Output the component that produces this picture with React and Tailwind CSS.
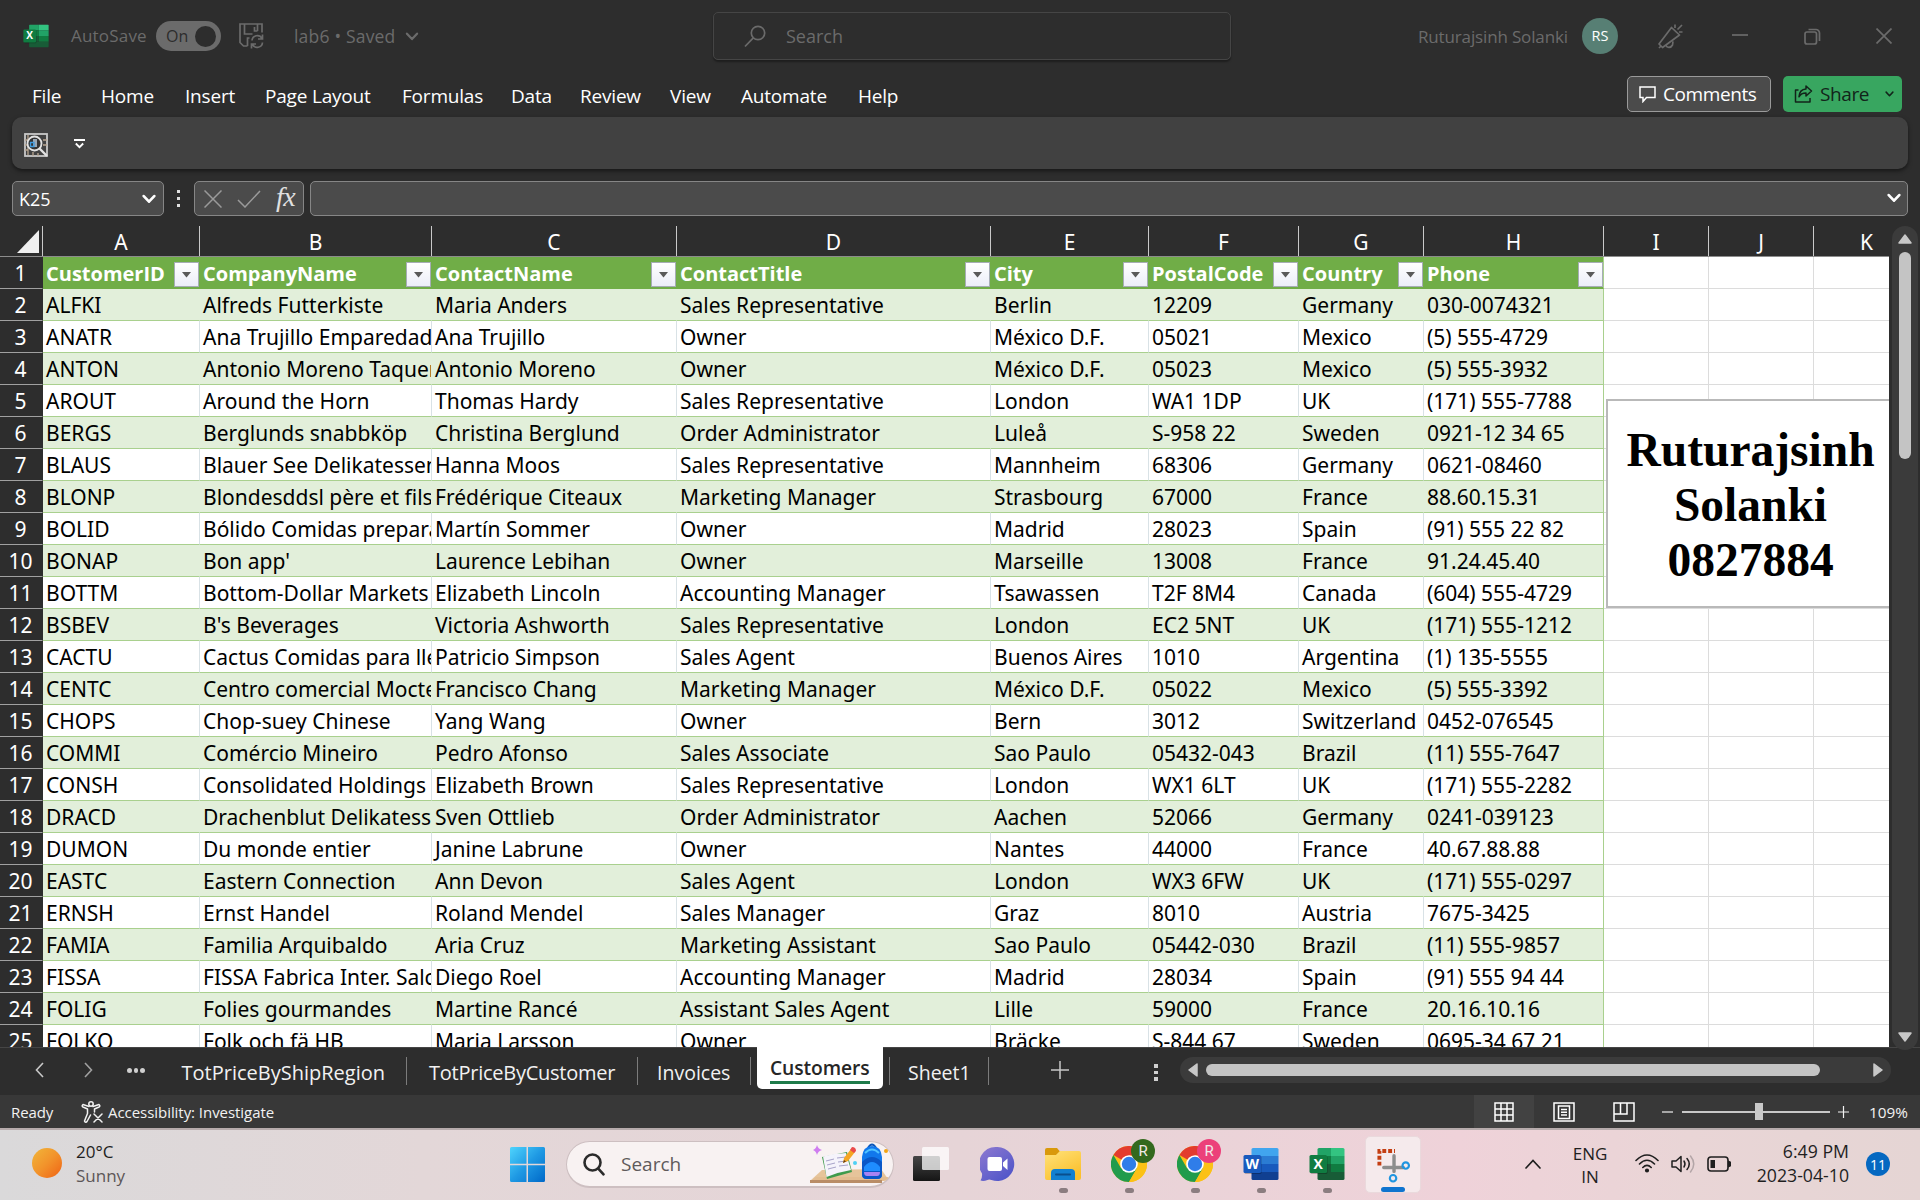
import React from "react";

const COLS = [
  { k: "A", w: "w-[157px]", h: "CustomerID" },
  { k: "B", w: "w-[232px]", h: "CompanyName" },
  { k: "C", w: "w-[245px]", h: "ContactName" },
  { k: "D", w: "w-[314px]", h: "ContactTitle" },
  { k: "E", w: "w-[158px]", h: "City" },
  { k: "F", w: "w-[150px]", h: "PostalCode" },
  { k: "G", w: "w-[125px]", h: "Country" },
  { k: "H", w: "w-[180px]", h: "Phone" },
  { k: "I", w: "w-[105px]" },
  { k: "J", w: "w-[105px]" },
  { k: "K", w: "w-[106px]" },
];

const ROWS = [
  ["ALFKI", "Alfreds Futterkiste", "Maria Anders", "Sales Representative", "Berlin", "12209", "Germany", "030-0074321"],
  ["ANATR", "Ana Trujillo Emparedados", "Ana Trujillo", "Owner", "México D.F.", "05021", "Mexico", "(5) 555-4729"],
  ["ANTON", "Antonio Moreno Taquería", "Antonio Moreno", "Owner", "México D.F.", "05023", "Mexico", "(5) 555-3932"],
  ["AROUT", "Around the Horn", "Thomas Hardy", "Sales Representative", "London", "WA1 1DP", "UK", "(171) 555-7788"],
  ["BERGS", "Berglunds snabbköp", "Christina Berglund", "Order Administrator", "Luleå", "S-958 22", "Sweden", "0921-12 34 65"],
  ["BLAUS", "Blauer See Delikatessen", "Hanna Moos", "Sales Representative", "Mannheim", "68306", "Germany", "0621-08460"],
  ["BLONP", "Blondesddsl père et fils", "Frédérique Citeaux", "Marketing Manager", "Strasbourg", "67000", "France", "88.60.15.31"],
  ["BOLID", "Bólido Comidas preparadas", "Martín Sommer", "Owner", "Madrid", "28023", "Spain", "(91) 555 22 82"],
  ["BONAP", "Bon app'", "Laurence Lebihan", "Owner", "Marseille", "13008", "France", "91.24.45.40"],
  ["BOTTM", "Bottom-Dollar Markets", "Elizabeth Lincoln", "Accounting Manager", "Tsawassen", "T2F 8M4", "Canada", "(604) 555-4729"],
  ["BSBEV", "B's Beverages", "Victoria Ashworth", "Sales Representative", "London", "EC2 5NT", "UK", "(171) 555-1212"],
  ["CACTU", "Cactus Comidas para llevar", "Patricio Simpson", "Sales Agent", "Buenos Aires", "1010", "Argentina", "(1) 135-5555"],
  ["CENTC", "Centro comercial Moctezuma", "Francisco Chang", "Marketing Manager", "México D.F.", "05022", "Mexico", "(5) 555-3392"],
  ["CHOPS", "Chop-suey Chinese", "Yang Wang", "Owner", "Bern", "3012", "Switzerland", "0452-076545"],
  ["COMMI", "Comércio Mineiro", "Pedro Afonso", "Sales Associate", "Sao Paulo", "05432-043", "Brazil", "(11) 555-7647"],
  ["CONSH", "Consolidated Holdings", "Elizabeth Brown", "Sales Representative", "London", "WX1 6LT", "UK", "(171) 555-2282"],
  ["DRACD", "Drachenblut Delikatessen", "Sven Ottlieb", "Order Administrator", "Aachen", "52066", "Germany", "0241-039123"],
  ["DUMON", "Du monde entier", "Janine Labrune", "Owner", "Nantes", "44000", "France", "40.67.88.88"],
  ["EASTC", "Eastern Connection", "Ann Devon", "Sales Agent", "London", "WX3 6FW", "UK", "(171) 555-0297"],
  ["ERNSH", "Ernst Handel", "Roland Mendel", "Sales Manager", "Graz", "8010", "Austria", "7675-3425"],
  ["FAMIA", "Familia Arquibaldo", "Aria Cruz", "Marketing Assistant", "Sao Paulo", "05442-030", "Brazil", "(11) 555-9857"],
  ["FISSA", "FISSA Fabrica Inter. Salchichas", "Diego Roel", "Accounting Manager", "Madrid", "28034", "Spain", "(91) 555 94 44"],
  ["FOLIG", "Folies gourmandes", "Martine Rancé", "Assistant Sales Agent", "Lille", "59000", "France", "20.16.10.16"],
  ["FOLKO", "Folk och fä HB", "Maria Larsson", "Owner", "Bräcke", "S-844 67", "Sweden", "0695-34 67 21"],
];

const MENU = [
  ["File", "w-[69px]"],
  ["Home", "w-[84px]"],
  ["Insert", "w-[80px]"],
  ["Page Layout", "w-[137px]"],
  ["Formulas", "w-[109px]"],
  ["Data", "w-[69px]"],
  ["Review", "w-[90px]"],
  ["View", "w-[71px]"],
  ["Automate", "w-[117px]"],
  ["Help", "w-[60px]"],
];

function ChevronDown({ className, sw = 2, w = 12, h = 8 }) {
  return (
    <svg className={className} width={w} height={h} viewBox="0 0 12 8" fill="none" stroke="currentColor" strokeWidth={sw} strokeLinecap="round" strokeLinejoin="round">
      <path d="M1.5 1.5 6 6.3l4.500-4.800" />
    </svg>
  );
}

function OfficeIcon({ letter, size, c, plate }) {
  return (
    <svg width={size} height={size} viewBox="0 0 36 36" className="shrink-0">
      <clipPath id={"sheet" + letter + size}><rect x="8.500" y="2" width="27" height="32" rx="1.500" /></clipPath>
      <g clipPath={"url(#sheet" + letter + size + ")"}>{c}</g>
      <rect x="1.500" y="10" width="17" height="18" rx="1.500" fill="#000" opacity=".25" />
      <rect x="0.500" y="9" width="17.500" height="18" rx="1.500" fill={plate} />
      <text x="9.200" y="22.800" textAnchor="middle" fontSize="14" fontWeight="700" fontFamily="Open Sans, sans-serif" fill="#fff">{letter}</text>
    </svg>
  );
}
const EXCEL = (
  <>
    <rect x="8" y="2" width="14" height="8" fill="#21a366" /><rect x="22" y="2" width="14" height="8" fill="#33c481" />
    <rect x="8" y="10" width="14" height="8" fill="#107c41" /><rect x="22" y="10" width="14" height="8" fill="#21a366" />
    <rect x="8" y="18" width="14" height="8" fill="#185c37" /><rect x="22" y="18" width="14" height="8" fill="#107c41" />
    <rect x="8" y="26" width="28" height="8" fill="#185c37" />
  </>
);
const WORD = (
  <>
    <rect x="8" y="2" width="28" height="8" fill="#41a5ee" /><rect x="8" y="10" width="28" height="8" fill="#2b7cd3" />
    <rect x="8" y="18" width="28" height="8" fill="#185abd" /><rect x="8" y="26" width="28" height="8" fill="#103f91" />
  </>
);

function TitleBar() {
  return (
    <div className="flex h-[72px] items-center text-[17px] text-[#6b6b6b]">
      <div className="ml-[23px] w-[48px]"><OfficeIcon letter="X" size={26} c={EXCEL} plate="#107c41" /></div>
      <div className="w-[85px] tracking-[0.2px]">AutoSave</div>
      <div className="flex h-[30px] w-[65px] items-center justify-between rounded-full bg-[#6b6b6b] pl-[10px] pr-[5px] text-[16px] text-[#2d2d2d]">
        <span>On</span><span className="size-[21px] rounded-full bg-[#2d2d2d]" />
      </div>
      <svg className="ml-[18px]" width="25" height="26" viewBox="0 0 25 26" fill="none" stroke="currentColor" strokeWidth="1.700">
        <path d="M8.500 23H4.500L1 19.500V1h22v8.500M5.500 1v10h8M18.500 1v7M8.500 23v-8h2M18.500 8h-3v-4" />
        <path d="M13 17.500a5.300 5.300 0 0 1 10-2M23.500 11.500v4.500H19M23.500 19.500a5.300 5.300 0 0 1-10 2M12.500 25.500V21H17" />
      </svg>
      <div className="ml-[30px] w-[111px] whitespace-nowrap text-[17.5px] tracking-[0.2px]">lab6 • Saved</div>
      <ChevronDown w={14} h={9} />
      <div className="ml-[294px] flex h-[48px] w-[518px] items-center rounded-[5px] border border-[#454545] shadow-[0_2px_2px_rgba(0,0,0,0.35)]">
        <svg className="ml-[30px]" width="22" height="23" viewBox="0 0 22 23" fill="none" stroke="currentColor" strokeWidth="1.700"><circle cx="14" cy="8" r="6.700" /><path d="M9.300 12.800 1 21.500" /></svg>
        <span className="ml-[20px] mt-px text-[18px]">Search</span>
      </div>
      <div className="ml-[187px] mt-px w-[164px] whitespace-nowrap tracking-[-0.15px]">Ruturajsinh Solanki</div>
      <div className="flex size-[36px] items-center justify-center rounded-full bg-[#577f74] text-[14.5px] text-white">RS</div>
      <svg className="ml-[40px]" width="25" height="25" viewBox="0 0 25 25" fill="none" stroke="currentColor" strokeWidth="1.700" strokeLinejoin="round">
        <path d="M13.500 3.500 21.500 11 4.500 23.500 1 20zM2.500 22.500 1 24M8 21.500c1 2.500 5 2.500 6.500-.5l.5-3.500M17 4V.5M19.500 5.500 24 1M21 8h3.500" />
      </svg>
      <svg className="ml-[49px]" width="16" height="16" viewBox="0 0 16 16" stroke="currentColor" strokeWidth="1.700"><path d="M0 7h16" /></svg>
      <svg className="ml-[56px]" width="17" height="17" viewBox="0 0 17 17" fill="none" stroke="currentColor" strokeWidth="1.700"><rect x="1" y="4" width="11.500" height="12" rx="2" /><path d="M4.500 1.500H12a3.500 3.500 0 0 1 3.500 3.500v8" /></svg>
      <svg className="ml-[55px]" width="16" height="16" viewBox="0 0 16 16" stroke="currentColor" strokeWidth="1.700"><path d="m0.500 0.500 15 15m0-15-15 15" /></svg>
    </div>
  );
}

function MenuBar() {
  return (
    <div className="flex h-[45px] items-start">
      <div className="ml-[32px] mt-[11px] flex text-[19px] leading-[26px] tracking-[-0.2px] text-white">
        {MENU.map(([t, w]) => <div key={t} className={"whitespace-nowrap " + w}>{t}</div>)}
      </div>
      <div className="ml-[709px] mt-[4px] flex h-[36px] w-[144px] items-center rounded-[5px] border border-[#9a9a9a] bg-[#4b4b4b] pl-[11px] text-[19px] tracking-[-0.4px] text-white">
        <svg width="17" height="17" viewBox="0 0 17 17" fill="none" stroke="currentColor" strokeWidth="1.500"><path d="M1 1h15v10.500H7.500L4 15.500v-4H1z" /></svg>
        <span className="ml-[7px] mt-px">Comments</span>
      </div>
      <div className="ml-[12px] mt-[4px] flex h-[36px] w-[119px] items-center rounded-[5px] bg-[#38a660] pl-[11px] text-[19px] tracking-[-0.4px] text-[#12241a]">
        <svg width="19" height="18" viewBox="0 0 19 18" fill="none" stroke="currentColor" strokeWidth="1.500" strokeLinejoin="round"><path d="M4.500 5H1.500v12H16v-4M12 1l5.500 5-5.500 5V8C8.500 8 6.500 9 5 11.800 5.300 7 8 4.200 12 4z" /></svg>
        <span className="ml-[7px] mt-px w-[65px]">Share</span>
        <ChevronDown w={9} h={6} />
      </div>
    </div>
  );
}

function Toolbar() {
  return (
    <div className="mx-[12px] flex h-[52px] items-center rounded-[10px] bg-[#414141] shadow-[0_2px_4px_rgba(0,0,0,0.5)]">
      <svg className="ml-[12px] mt-[3px]" width="24" height="24" viewBox="0 0 24 24" fill="none">
        <rect x="1" y="1" width="22" height="22" stroke="#c8c8c8" strokeWidth="1.800" />
        <path d="M4 2v20M1 7h3M1 12h3M1 17h3M19 7h4M19 12h4M9 19v4M14 20v3" stroke="#b9a792" strokeWidth="1.300" />
        <circle cx="10.500" cy="10.500" r="7" fill="#333" stroke="#e2e2e2" strokeWidth="1.800" />
        <path d="M9 6h4v8H9z" fill="#9aa7b5" /><path d="M6.500 9.500H10v4H6.500z" stroke="#3f9be0" strokeWidth="1.300" />
        <path d="m15.500 15.500 7.500 7.500" stroke="#e2e2e2" strokeWidth="2.400" />
      </svg>
      <svg className="ml-[26px] mt-px" width="11" height="10" viewBox="0 0 11 10" fill="none" stroke="#fff" strokeWidth="1.800"><path d="M0 1h11M1.800 4.500l3.700 3.700 3.700-3.700" /></svg>
    </div>
  );
}

function FormulaBar() {
  const box = "flex h-[35px] items-center rounded-[5px] border border-[#868686] bg-[#4b4b4b] ";
  return (
    <div className="mt-[12px] flex items-center pl-[12px] pr-[12px] text-white">
      <div className={box + "w-[152px] justify-between pl-[6px] pr-[7px] text-[18px]"}>
        <span className="mt-px">K25</span><ChevronDown className="mt-px" sw={2.3} w={14} h={10} />
      </div>
      <div className="ml-[13px] flex w-[4px] flex-col gap-[4px]">
        <span className="size-[3px] bg-[#e0e0e0]" /><span className="size-[3px] bg-[#e0e0e0]" /><span className="size-[3px] bg-[#e0e0e0]" />
      </div>
      <div className={box + "ml-[13px] w-[110px] pl-[9px]"}>
        <svg width="18" height="18" viewBox="0 0 18 18" stroke="#9a9a9a" strokeWidth="1.500"><path d="m0.500 0.500 17 17m0-17-17 17" /></svg>
        <svg className="ml-[15px]" width="24" height="18" viewBox="0 0 24 18" fill="none" stroke="#9a9a9a" strokeWidth="1.500"><path d="m1 10 7 7L23 1" /></svg>
        <span className="-mt-[4px] ml-[15px] font-['Liberation_Serif',serif] text-[28px] italic leading-[30px] tracking-[-0.5px] text-[#e0e0e0]">fx</span>
      </div>
      <div className={box + "ml-[6px] flex-1 justify-end pr-[6px]"}><ChevronDown className="-mt-[2px]" sw={2.3} w={14} h={10} /></div>
    </div>
  );
}

function FilterButton() {
  return (
    <span className="mt-[5px] flex size-[25px] shrink-0 items-center justify-center border border-[#a6adb5] bg-gradient-to-b from-white to-[#eceef8]">
      <svg width="9" height="6" viewBox="0 0 9 6"><path d="M0 0h9L4.500 5.500z" fill="#5a5a5a" /></svg>
    </span>
  );
}

function Sheet() {
  return (
    <div className="relative h-[821px] w-[1889px] overflow-hidden font-['Noto_Sans','Open_Sans',sans-serif] text-[21px] text-black">
      <div className="flex h-[31px] w-[1920px] border-b border-[#8c8c8c] text-white">
        <div className="flex w-[43px] shrink-0 justify-end border-r border-[#c9c9c9] pr-[3px] pt-[4px]">
          <svg width="22" height="23" viewBox="0 0 22 23"><path d="M22 0v23H0z" fill="#f0f0f0" /></svg>
        </div>
        {COLS.map((c) => (
          <div key={c.k} className={"shrink-0 border-r border-[#c9c9c9] text-center leading-[33px] " + c.w}>{c.k}</div>
        ))}
      </div>
      {[COLS.map((c) => c.h), ...ROWS].map((r, i) => {
        const head = i === 0;
        const band = i % 2 === 1;
        return (
          <div key={i} className="flex h-[32px] w-[1920px] leading-[33px]">
            <div className="w-[43px] shrink-0 border-b border-r border-b-[#a0a0a0] border-r-[#2d2d2d] bg-[#2d2d2d] pr-px text-center text-white">{i + 1}</div>
            {COLS.map((c, j) => {
              const inTable = j < 8;
              let tone = "border-[#dcdcdc] bg-white";
              if (inTable && head) tone = "border-[#70ad47] bg-[#70ad47]";
              else if (inTable && band) tone = "border-b-[#a9d08e] border-r-[#e2efda] bg-[#e2efda]";
              else if (inTable) tone = "border-b-[#a9d08e] border-r-[#d9e2e6] bg-white";
              const edge = j === 7 ? " border-r-[#a9d08e]!" : "";
              return (
                <div key={c.k} className={"flex shrink-0 overflow-hidden whitespace-nowrap border-b border-r pl-[3px] " + tone + edge + " " + c.w}>
                  {head && inTable ? (
                    <>
                      <span className="flex-1 font-['Open_Sans',sans-serif] text-[20px] font-bold text-white">{c.h}</span>
                      <FilterButton />
                    </>
                  ) : (
                    <span className="shrink-0">{inTable ? r[j] : ""}</span>
                  )}
                </div>
              );
            })}
          </div>
        );
      })}
      <div className="absolute left-[1606px] top-[173px] flex h-[209px] w-[289px] flex-col items-center justify-center border-2 border-[#b9b9b9] bg-white pt-[4px] text-center font-['Liberation_Serif',serif] text-[47.5px] font-bold leading-[55px]">
        <div>Ruturajsinh</div><div>Solanki</div><div>0827884</div>
      </div>
    </div>
  );
}

function VerticalScroll() {
  return (
    <div className="ml-[3px] flex h-[824px] w-[26px] flex-col items-center rounded-[13px] bg-[#3b3b3b]">
      <svg className="mt-[8px]" width="14" height="10" viewBox="0 0 14 10"><path d="M7 1 13 9H1z" fill="#c8c8c8" stroke="#c8c8c8" strokeWidth="1.500" strokeLinejoin="round" /></svg>
      <div className="mt-[8px] h-[207px] w-[12px] rounded-full bg-[#c4c4c4]" />
      <svg className="mb-[8px] mt-auto" width="14" height="10" viewBox="0 0 14 10"><path d="M7 9 13 1H1z" fill="#c8c8c8" stroke="#c8c8c8" strokeWidth="1.500" strokeLinejoin="round" /></svg>
    </div>
  );
}

function Divider({ className }) {
  return <div className={"mt-[9px] h-[28px] w-px shrink-0 bg-[#7c7c7c] " + className} />;
}

function SheetTabs() {
  const tab = "mt-[9px] shrink-0 whitespace-nowrap leading-[31px] ";
  return (
    <div className="flex h-[48px] items-start border-t border-[#454545] text-[20px] text-[#f2f2f2]">
      <svg className="ml-[35px] mt-[14px]" width="9" height="16" viewBox="0 0 9 16" fill="none" stroke="#c8c8c8" strokeWidth="1.600"><path d="M8 1 1.500 8 8 15" /></svg>
      <svg className="ml-[40px] mt-[14px]" width="9" height="16" viewBox="0 0 9 16" fill="none" stroke="#a0a0a0" strokeWidth="1.600"><path d="m1 1 6.500 7L1 15" /></svg>
      <div className="ml-[34px] mt-[20px] flex gap-[2px]">
        <span className="size-[4.5px] rounded-full bg-[#cfcfcf]" /><span className="size-[4.5px] rounded-full bg-[#cfcfcf]" /><span className="size-[4.5px] rounded-full bg-[#cfcfcf]" />
      </div>
      <div className={tab + "ml-[37px] w-[224.5px]"}>TotPriceByShipRegion</div>
      <Divider />
      <div className={tab + "ml-[22px] w-[208px] tracking-[-0.25px]"}>TotPriceByCustomer</div>
      <Divider />
      <div className={tab + "ml-[19px] w-[93px] text-[19.5px]"}>Invoices</div>
      <Divider />
      <div className="-mt-px ml-[6px] h-[42px] w-[126px] shrink-0 rounded-b-[5px] bg-white px-[13px] text-[19.3px] font-semibold text-[#262626]">
        <div className="border-b-[3px] border-[#1e7b4a] pt-[8px] leading-[26px] tracking-[-0.1px]">Customers</div>
      </div>
      <Divider className="ml-[6px]" />
      <div className={tab + "ml-[18px] w-[80px] text-[19.5px]"}>Sheet1</div>
      <Divider />
      <svg className="ml-[62px] mt-[13px] shrink-0" width="18" height="18" viewBox="0 0 18 18" stroke="#c8c8c8" strokeWidth="1.500"><path d="M9 0v18M0 9h18" /></svg>
      <div className="ml-[85px] mt-[16px] flex flex-col gap-[3px]">
        <span className="size-[3.5px] bg-[#d0d0d0]" /><span className="size-[3.5px] bg-[#d0d0d0]" /><span className="size-[3.5px] bg-[#d0d0d0]" />
      </div>
      <div className="ml-[22px] mt-[9px] flex h-[26px] w-[711px] items-center rounded-full bg-[#3b3b3b] px-[8px]">
        <svg width="10" height="14" viewBox="0 0 10 14"><path d="M1 7 9 1v12z" fill="#c8c8c8" stroke="#c8c8c8" strokeWidth="1.500" strokeLinejoin="round" /></svg>
        <div className="ml-[8px] h-[12px] w-[614px] rounded-full bg-[#c4c4c4]" />
        <svg className="ml-auto" width="10" height="14" viewBox="0 0 10 14"><path d="M9 7 1 1v12z" fill="#c8c8c8" stroke="#c8c8c8" strokeWidth="1.500" strokeLinejoin="round" /></svg>
      </div>
    </div>
  );
}

function StatusBar() {
  return (
    <div className="flex h-[33px] items-center bg-[#383838] text-[15px] text-[#f2f2f2]">
      <div className="ml-[11px] mt-px w-[70px] tracking-[-0.1px]">Ready</div>
      <svg width="22" height="22" viewBox="0 0 22 22" fill="none" stroke="currentColor" strokeWidth="1.500" strokeLinecap="round" strokeLinejoin="round">
        <circle cx="10" cy="3" r="2.200" /><path d="M8 5.500 2 3.500C.8 4.500 1 5.500 2 6l4.500 2v4.500L3.500 20c.5 1.500 1.800 1.500 2.500.5L9.500 14M12 5.500l6-2c1.200 1 1 2 0 2.500L13.500 8v3M13 13l8 8m0-8-8 8" />
      </svg>
      <div className="ml-[5px] mt-px tracking-[-0.05px]">Accessibility: Investigate</div>
      <div className="ml-auto flex h-full w-[60px] items-center justify-center bg-[#424242]">
        <svg width="20" height="20" viewBox="0 0 20 20" fill="none" stroke="#fff" strokeWidth="1.500"><path d="M1 1h18v18H1zM7 1v18M13 1v18M1 7h18M1 13h18" /></svg>
      </div>
      <svg className="ml-[19px]" width="22" height="20" viewBox="0 0 22 20" fill="none" stroke="#fff" strokeWidth="1.500"><path d="M1 1h20v18H1zM5.500 4h11v12.500h-11zM8 7.500h6M8 10.300h6M8 13.100h6" /></svg>
      <svg className="ml-[38px]" width="22" height="20" viewBox="0 0 22 20" fill="none" stroke="#fff" strokeWidth="1.500"><path d="M1 1h20v18H1zM1 12h13V1M7.500 1v11" /></svg>
      <svg className="ml-[27px]" width="11" height="12" viewBox="0 0 11 12" stroke="#f2f2f2" strokeWidth="1.200"><path d="M0 6h11" /></svg>
      <div className="ml-[9px] flex w-[148px] items-center">
        <div className="h-[2px] w-[73px] bg-[#c8c8c8]" /><div className="h-[17px] w-[8px] bg-[#c8c8c8]" /><div className="h-[2px] flex-1 bg-[#c8c8c8]" />
      </div>
      <svg className="ml-[8px]" width="11" height="12" viewBox="0 0 11 12" stroke="#f2f2f2" strokeWidth="1.200"><path d="M0 6h11M5.500 0v12" /></svg>
      <div className="ml-[20px] mt-px w-[51px] text-[15.3px]">109%</div>
    </div>
  );
}

function Chrome({ badge }) {
  return (
    <div className="relative">
      <svg width="36" height="36" viewBox="0 0 36 36">
        <circle cx="18" cy="18" r="18" fill="#fbc116" />
        <path d="M18 18 2.400 9A18 18 0 0 1 33.600 9z" fill="#e33b2e" />
        <path d="M2.400 9A18 18 0 0 0 18 36l7.800-13.500L18 18 10.200 22.500z" fill="#219b4c" />
        <path d="M18 9.500h15.900A18 18 0 0 1 18 36l7.800-13.500z" fill="#fbc116" />
        <circle cx="18" cy="18" r="8.800" fill="#fff" /><circle cx="18" cy="18" r="7.200" fill="#2f7de9" />
      </svg>
      <span className={"absolute -top-[7px] left-[20px] flex size-[24px] items-center justify-center rounded-full font-['Roboto',sans-serif] text-[15px] text-[#f0e8e8] " + badge}>R</span>
    </div>
  );
}

function App36({ children, run }) {
  return (
    <div className="flex h-[70px] w-[66px] shrink-0 flex-col items-center">
      <div className="mt-[16px] flex h-[36px] items-center">{children}</div>
      {run && <span className="mt-[6px] h-[5px] w-[9px] rounded-full bg-[#8b7d80]" />}
    </div>
  );
}

function SearchArt() {
  return (
    <svg className="ml-auto" width="80" height="42" viewBox="0 0 80 42">
      <path d="M12 27 71 26l7 10-78 2z" fill="#e6c49a" /><path d="M1 38h73q4-1 4-4H6z" fill="#e3bd91" /><path d="M0 37h72v3H0z" fill="#b98d67" />
      <path d="M12 14 37 9l5 20-25 7z" fill="#3f9b4d" /><path d="M13 13.500 24 11l3.500 19-11 4zM24 11l12-1 5 17-13.500 3z" fill="#f5f3fb" />
      <path d="m16 18 8-2m-7 6 8-2m-7 6 8-2m1-9 9-1m-8 5 9-1m-8 5 9-1" stroke="#a7a3c9" strokeWidth="1" />
      <path d="m33 20 1-5 7-9 4 3-7 9z" fill="#f5a623" /><path d="m40 7 2-3q4 0 4 4l-2 2z" fill="#ea4b4b" /><path d="m33 20 1-3 2 1.500z" fill="#5a3a1c" />
      <path d="M58 5q4-7 8 0" fill="none" stroke="#0b56b8" strokeWidth="2" />
      <path d="M52 14Q53 3 62 3t10 11v17q0 5-5 5H57q-5 0-5-5z" fill="#1178ec" /><path d="M52 19q10-10 20 0v13q0 4-5 4H57q-5 0-5-4z" fill="#0a57c7" />
      <path d="M54 24q8-10 16 0v4H54z" fill="#1e8dff" /><path d="M54 29h16q0 4-3 4H57q-3 0-3-4z" fill="#a783f2" /><path d="M55 10q7-7 14 0" fill="none" stroke="#4fc3ff" strokeWidth="2" />
      <path d="M7 2q1 4 5 5-4 1-5 5-1-4-4-5 3-1 4-5z" fill="#cf7df0" /><circle cx="45" cy="20" r="2" fill="#4fd0f5" /><circle cx="76" cy="8" r="2" fill="#f2a413" />
    </svg>
  );
}

function Taskbar() {
  return (
    <div className="flex h-[72px] items-start border-t-2 border-[#b7abac] bg-[linear-gradient(90deg,#dad9da_0%,#e3d7d8_22%,#e6d4d7_50%,#efd2d9_76%,#e9d5d6_88%,#e5d5d4_100%)] text-[17px] text-[#1f1f1f]">
      <div className="ml-[32px] mt-[18px] size-[30px] rounded-full bg-gradient-to-br from-[#f0b63a] via-[#f2932b] to-[#ee6012]" />
      <div className="ml-[14px] mt-[10px] w-[434px] leading-[24px]"><div>20°C</div><div className="text-[#5c5657]">Sunny</div></div>
      <svg className="mt-[17px]" width="35" height="35" viewBox="0 0 35 35">
        <defs><linearGradient id="win" gradientUnits="userSpaceOnUse" x1="0" y1="0" x2="35" y2="35"><stop offset="0" stopColor="#4fd4fd" /><stop offset=".5" stopColor="#1f9ae4" /><stop offset="1" stopColor="#0068c8" /></linearGradient></defs>
        <path d="M1.500 0h15v16.700H0V1.500Q0 0 1.500 0zM18 0h15.500Q35 0 35 1.500v15.200H18zM0 18.200h16.500V35h-15Q0 35 0 33.500zM18 18.200h17v15.300q0 1.500-1.500 1.500H18z" fill="url(#win)" />
      </svg>
      <div className="ml-[21px] mt-[11px] flex h-[47px] w-[328px] items-center rounded-full border border-b-2 border-[#cdbfc1] bg-[#f8f2f2]">
        <svg className="ml-[16px]" width="22" height="23" viewBox="0 0 22 23" fill="none" stroke="#2b2b2b" strokeWidth="2.600" strokeLinecap="round"><circle cx="9.500" cy="9.500" r="8" /><path d="m15.500 15.800 5 5.500" /></svg>
        <span className="ml-[16px] text-[19px] text-[#5f5a5b]">Search</span>
        <div className="ml-auto mr-[3px]"><SearchArt /></div>
      </div>
      <div className="ml-[4px] flex">
        <App36>
          <svg width="36" height="36" viewBox="0 0 36 36">
            <defs>
              <linearGradient id="tv" x2="0" y2="1"><stop offset="0" stopColor="#454545" /><stop offset="1" stopColor="#151515" /></linearGradient>
            </defs>
            <rect x="0" y="10" width="27" height="25" rx="1.500" fill="url(#tv)" /><rect x="9" y="1" width="27" height="23" rx="1.500" fill="#fff" opacity=".75" />
          </svg>
        </App36>
        <App36>
          <svg width="35" height="36" viewBox="0 0 35 36">
            <defs><linearGradient id="chat" x2="0.800" y2="1"><stop offset="0" stopColor="#8f7ad0" /><stop offset="1" stopColor="#4f55c9" /></linearGradient></defs>
            <path d="M17.500 1a17 17 0 1 1-6 33q-2.500-1-4 0-4 1.500-7 .5 2-3.500 1.500-7A17 17 0 0 1 17.500 1z" fill="url(#chat)" />
            <rect x="7.500" y="11" width="14.500" height="14" rx="2" fill="#fff" /><path d="m23 16.500 4.500-4V24L23 20z" fill="#fff" />
          </svg>
        </App36>
        <App36 run>
          <svg width="36" height="36" viewBox="0 0 36 36">
            <defs><linearGradient id="fold" x2="0.600" y2="1"><stop offset="0" stopColor="#ffe27a" /><stop offset="1" stopColor="#fbc02d" /></linearGradient></defs>
            <path d="M0 4q0-2 2-2h10l3 3.500-4 4H0z" fill="#d9990b" /><path d="M0 9h11l4-4h19q2 0 2 2v25q0 2-2 2H2q-2 0-2-2z" fill="url(#fold)" />
            <path d="M6 34v-7q0-4 4-4h16q4 0 4 4v7z" fill="#1180d0" /><path d="M11 28.500h14" stroke="#0a4f8c" strokeWidth="2" strokeLinecap="round" />
          </svg>
        </App36>
        <App36 run><Chrome badge="bg-[#33691e]" /></App36>
        <App36 run><Chrome badge="bg-[#ec407a]" /></App36>
        <App36 run><OfficeIcon letter="W" size={36} c={WORD} plate="#185abd" /></App36>
        <App36 run><OfficeIcon letter="X" size={36} c={EXCEL} plate="#107c41" /></App36>
        <div className="ml-[5px] mt-[6px] flex h-[57px] w-[56px] flex-col items-center rounded-[5px] border border-[#ead9dc] bg-[#f5eaec]">
          <svg className="ml-[3px] mt-[11px]" width="36" height="36" viewBox="0 0 36 36" fill="none">
            <path d="M17 8V24M6.500 20h20" stroke="#8d8d8d" strokeWidth="3.500" strokeLinecap="round" />
            <path d="M2 18V3h16" stroke="#c43e12" strokeWidth="4" strokeDasharray="4 2" />
            <circle cx="29" cy="18" r="3.300" stroke="#2095e0" strokeWidth="2.200" /><circle cx="16" cy="31" r="3.300" stroke="#2095e0" strokeWidth="2.200" />
          </svg>
          <span className="mt-[4px] h-[5px] w-[24px] rounded-full bg-[#0f74cf]" />
        </div>
      </div>
      <svg className="ml-[104px] mt-[29px]" width="16" height="10" viewBox="0 0 16 10" fill="none" stroke="#1f1f1f" strokeWidth="1.700" strokeLinecap="round"><path d="M1 9 8 1.500 15 9" /></svg>
      <div className="ml-[24px] mt-[12px] w-[50px] text-center leading-[23px]"><div>ENG</div><div>IN</div></div>
      <svg className="ml-[20px] mt-[23px]" width="24" height="20" viewBox="0 0 24 20" fill="none" stroke="#1f1f1f" strokeWidth="1.600" strokeLinecap="round"><path d="M1 7.500q11-11 22 0M4.500 11q7.500-7.500 15 0M7.800 14.500q4.200-4.200 8.400 0" /><circle cx="12" cy="17.500" r="1.300" fill="#1f1f1f" /></svg>
      <svg className="ml-[12px] mt-[24px]" width="24" height="20" viewBox="0 0 24 20" fill="none" stroke="#1f1f1f" strokeWidth="1.500" strokeLinecap="round" strokeLinejoin="round"><path d="M1 7v6h4l5 4.500V2.500L5 7zM13 7q2 3 0 6M16 4.500q4.500 5.500 0 11" /><path d="M19.500 2q6.500 8 0 16" stroke="#b3a5a7" /></svg>
      <svg className="ml-[12px] mt-[26px]" width="24" height="16" viewBox="0 0 24 16" fill="none" stroke="#1f1f1f" strokeWidth="1.600"><rect x="1" y="1" width="20" height="14" rx="3" /><path d="M3.500 4h4.500v8H3.500z" fill="#1f1f1f" stroke="none" /><path d="M21.500 5.500 24 6.500v3l-2.500 1z" fill="#1f1f1f" /></svg>
      <div className="ml-[18px] mt-[9px] w-[100px] text-right text-[17.7px] leading-[24px]"><div>6:49 PM</div><div>2023-04-10</div></div>
      <div className="ml-[17px] mt-[22px] flex size-[24px] items-center justify-center rounded-full bg-[#0568c1] text-[14px] text-white">11</div>
    </div>
  );
}

export default function App() {
  return (
    <div className="h-[1200px] w-[1920px] overflow-hidden bg-[#2d2d2d] font-['Open_Sans','Noto_Sans',sans-serif]">
      <TitleBar />
      <MenuBar />
      <Toolbar />
      <FormulaBar />
      <div className="mt-[10px] flex h-[821px] items-start">
        <Sheet />
        <VerticalScroll />
      </div>
      <SheetTabs />
      <StatusBar />
      <Taskbar />
    </div>
  );
}
